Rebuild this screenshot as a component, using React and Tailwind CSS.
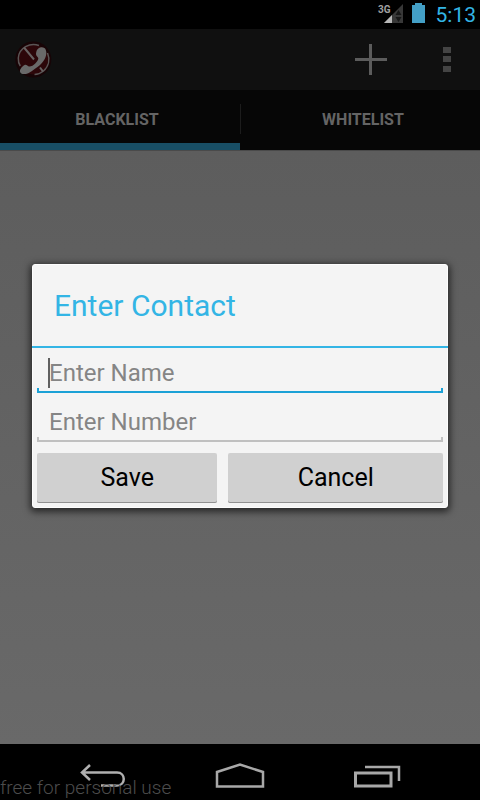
import React, { useState } from 'react';

const TABS = [
  { id: 'blacklist', label: 'BLACKLIST' },
  { id: 'whitelist', label: 'WHITELIST' },
];

function StatusBar() {
  return (
    <div className="flex h-[29px] items-center justify-end bg-black pr-1 text-[#33b5e5]">
      <svg width="54" height="26" viewBox="0 0 54 26" className="mr-[7px]" aria-hidden="true">
        <text x="3" y="11" fontSize="10" fontWeight="700" fontFamily="Roboto, sans-serif" fill="#a0a0a0">3G</text>
        <path d="M28 2v19H9z" fill="#383838" />
        <path d="M17 13v8H9z" fill="#b8b8b8" />
        <path d="M23.500 8l3 5h-6zM23.500 20l3-5h-6z" fill="#161616" />
        <path d="M40 1h7v2h3v18H37V3h3z" fill="#439fc6" />
      </svg>
      <span className="text-[21px] leading-[26px]">5:13</span>
    </div>
  );
}

function AppLogo() {
  return (
    <svg width="38" height="38" viewBox="0 0 38 38" aria-hidden="true">
      <circle cx="19.300" cy="18.500" r="18" fill="#170406" />
      <circle cx="19.300" cy="18.500" r="15" fill="#2c0609" />
      <path
        d="M25 4.500C16 1 5 7 4.300 17c-.2 4 .5 6 2 8M33.500 12c2.500 6 1.500 13-4 18-3 2.500-6 3.500-9 3.500"
        fill="none"
        stroke="#5a5555"
        strokeWidth="1.500"
      />
      <path d="M10 6.500l10 12M26 26.500l3 4" stroke="#666161" strokeWidth="2" />
      <path
        d="M22.700 9.500c1-2 3-3.500 5-3.300 2 .1 3.800 1 4 2.600.8 2 .8 4 .3 5.700-.5 2.500-1.700 4.500-3.300 6.500-2.200 2.700-4.700 5-7.700 6.800-2.200 1.700-4.500 3.400-6.700 4.400-2.300.9-5 1.200-6.600.6-2-1-2.300-3.500-1-5 1-1.700 2.500-3.300 4.300-4 1.600-.3 2.700 1.500 4.300 1.700 2.200-.1 4.200-1.200 5.700-2.700 1.600-1.500 3-3.200 3.300-5 .2-2-2.500-2.500-2.300-5 .1-1.300.4-2.200.7-3.300z"
        fill="#696969"
      />
    </svg>
  );
}

function ActionBar() {
  return (
    <header className="flex h-[61px] items-center bg-[#101010] pl-[14px] pr-[26px]">
      <AppLogo />
      <button type="button" aria-label="Add contact" className="ml-auto">
        <svg width="34" height="34" viewBox="0 0 34 34" aria-hidden="true">
          <path d="M17.500 1v31M2 16.500h32" stroke="#5c5c5c" strokeWidth="3" />
        </svg>
      </button>
      <button type="button" aria-label="More options" className="ml-[53px]">
        <svg width="14" height="28" viewBox="0 0 14 28" aria-hidden="true">
          <path d="M3 1h8v6H3zM3 10h8v6H3zM3 20h8v6H3z" fill="#444444" />
        </svg>
      </button>
    </header>
  );
}

function Field({ label, value, onChange, active }) {
  return (
    <label className="relative block">
      <input
        type="text"
        aria-label={label}
        placeholder={label}
        value={value}
        onChange={e => onChange(e.target.value)}
        className="block h-[30px] w-full bg-transparent px-3 text-[24px] leading-[30px] text-black outline-none placeholder:text-[#858585]"
      />
      {active && <span className="absolute left-[11px] top-0 h-[30px] w-[2px] bg-[#606060]" />}
      <span className={`block h-[5px] border-x-2 border-b-2 ${active ? 'border-[#1ba1d6]' : 'border-[#c0c0c0]'}`} />
    </label>
  );
}

function ContactDialog() {
  const [name, setName] = useState('');
  const [number, setNumber] = useState('');

  return (
    <form
      role="dialog"
      aria-label="Enter Contact"
      onSubmit={e => e.preventDefault()}
      className="w-full rounded-[3px] border border-[#fdfdfd] bg-[#f4f4f4] shadow-[0_2px_7px_2px_rgba(0,0,0,0.6)]"
    >
      <h2 className="-mx-px border-b-2 border-[#33b5e5] px-[22px] pb-[23px] pt-6 text-[30px] leading-[34px] text-[#33b5e5]">Enter Contact</h2>
      <div className="px-1 pb-1 pt-[10px]">
        <div className="flex flex-col gap-[14px]">
          <Field label="Enter Name" value={name} onChange={setName} active />
          <Field label="Enter Number" value={number} onChange={setNumber} />
        </div>
        <div className="mt-[11px] flex gap-[11px] text-[25px] leading-[30px] text-black">
          <button type="submit" className="h-[50px] flex-[180] rounded-[2px] bg-[#d0d0d0] shadow-[inset_0_-1px_0_#909090]">Save</button>
          <button type="button" className="h-[50px] flex-[214] rounded-[2px] bg-[#d0d0d0] shadow-[inset_0_-1px_0_#909090]">Cancel</button>
        </div>
      </div>
    </form>
  );
}

function NavBar() {
  return (
    <nav className="relative flex h-[56px] items-center justify-around bg-black px-[35px] pt-2">
      <button type="button" aria-label="Back">
        <svg width="48" height="26" viewBox="0 0 48 26" fill="none" stroke="#b0b0b0" strokeWidth="2.500" aria-hidden="true">
          <path d="M11 2L3 9.500l8 7.500M3 9.500h35c9 0 9 13 0 13H22" />
        </svg>
      </button>
      <button type="button" aria-label="Home">
        <svg width="50" height="26" viewBox="0 0 50 26" fill="none" stroke="#a8a8a8" strokeWidth="2.500" aria-hidden="true">
          <path d="M2 23.500V9L25 1.500 48 9v14.500z" />
        </svg>
      </button>
      <button type="button" aria-label="Recent apps">
        <svg width="48" height="26" viewBox="0 0 48 26" fill="none" stroke="#a8a8a8" strokeWidth="2.500" aria-hidden="true">
          <path d="M2.500 10h35.500v13H2.500z" strokeWidth="3" />
          <path d="M12 4h34v14" />
        </svg>
      </button>
      <span className="pointer-events-none absolute bottom-0 left-0 text-[19px] font-light leading-[24px] text-[#4c4c4c]">
        free for personal use
      </span>
    </nav>
  );
}

export default function App() {
  const [tab, setTab] = useState('blacklist');

  return (
    <div className="flex min-h-screen flex-col bg-black font-['Roboto',sans-serif]">
      <StatusBar />
      <div className="relative flex flex-1 flex-col">
        <ActionBar />
        <div className="relative flex bg-[#060606]">
          {TABS.map(t => (
            <button
              key={t.id}
              type="button"
              onClick={() => setTab(t.id)}
              className={`h-[60px] w-1/2 border-b-[7px] pt-[7px] text-[16px] font-bold leading-[20px] text-[#646464] first-of-type:pr-[6px] last-of-type:pl-[6px] ${tab === t.id ? 'border-[#184e65]' : 'border-transparent'}`}
            >
              {t.label}
            </button>
          ))}
          {/* Divider between the two tabs */}
          <span className="absolute left-1/2 top-[14px] h-[30px] w-px bg-[#1c1c1c]" />
        </div>
        <main className="flex-1 border-t border-[#4a4a4a] bg-linear-to-b from-[#5d5d5d] to-[#696969]" />

        {/* Dialog layer, centred between the system bars */}
        <div className="absolute inset-0 flex items-center justify-center px-8 pb-px">
          <ContactDialog />
        </div>
      </div>
      <NavBar />
    </div>
  );
}
